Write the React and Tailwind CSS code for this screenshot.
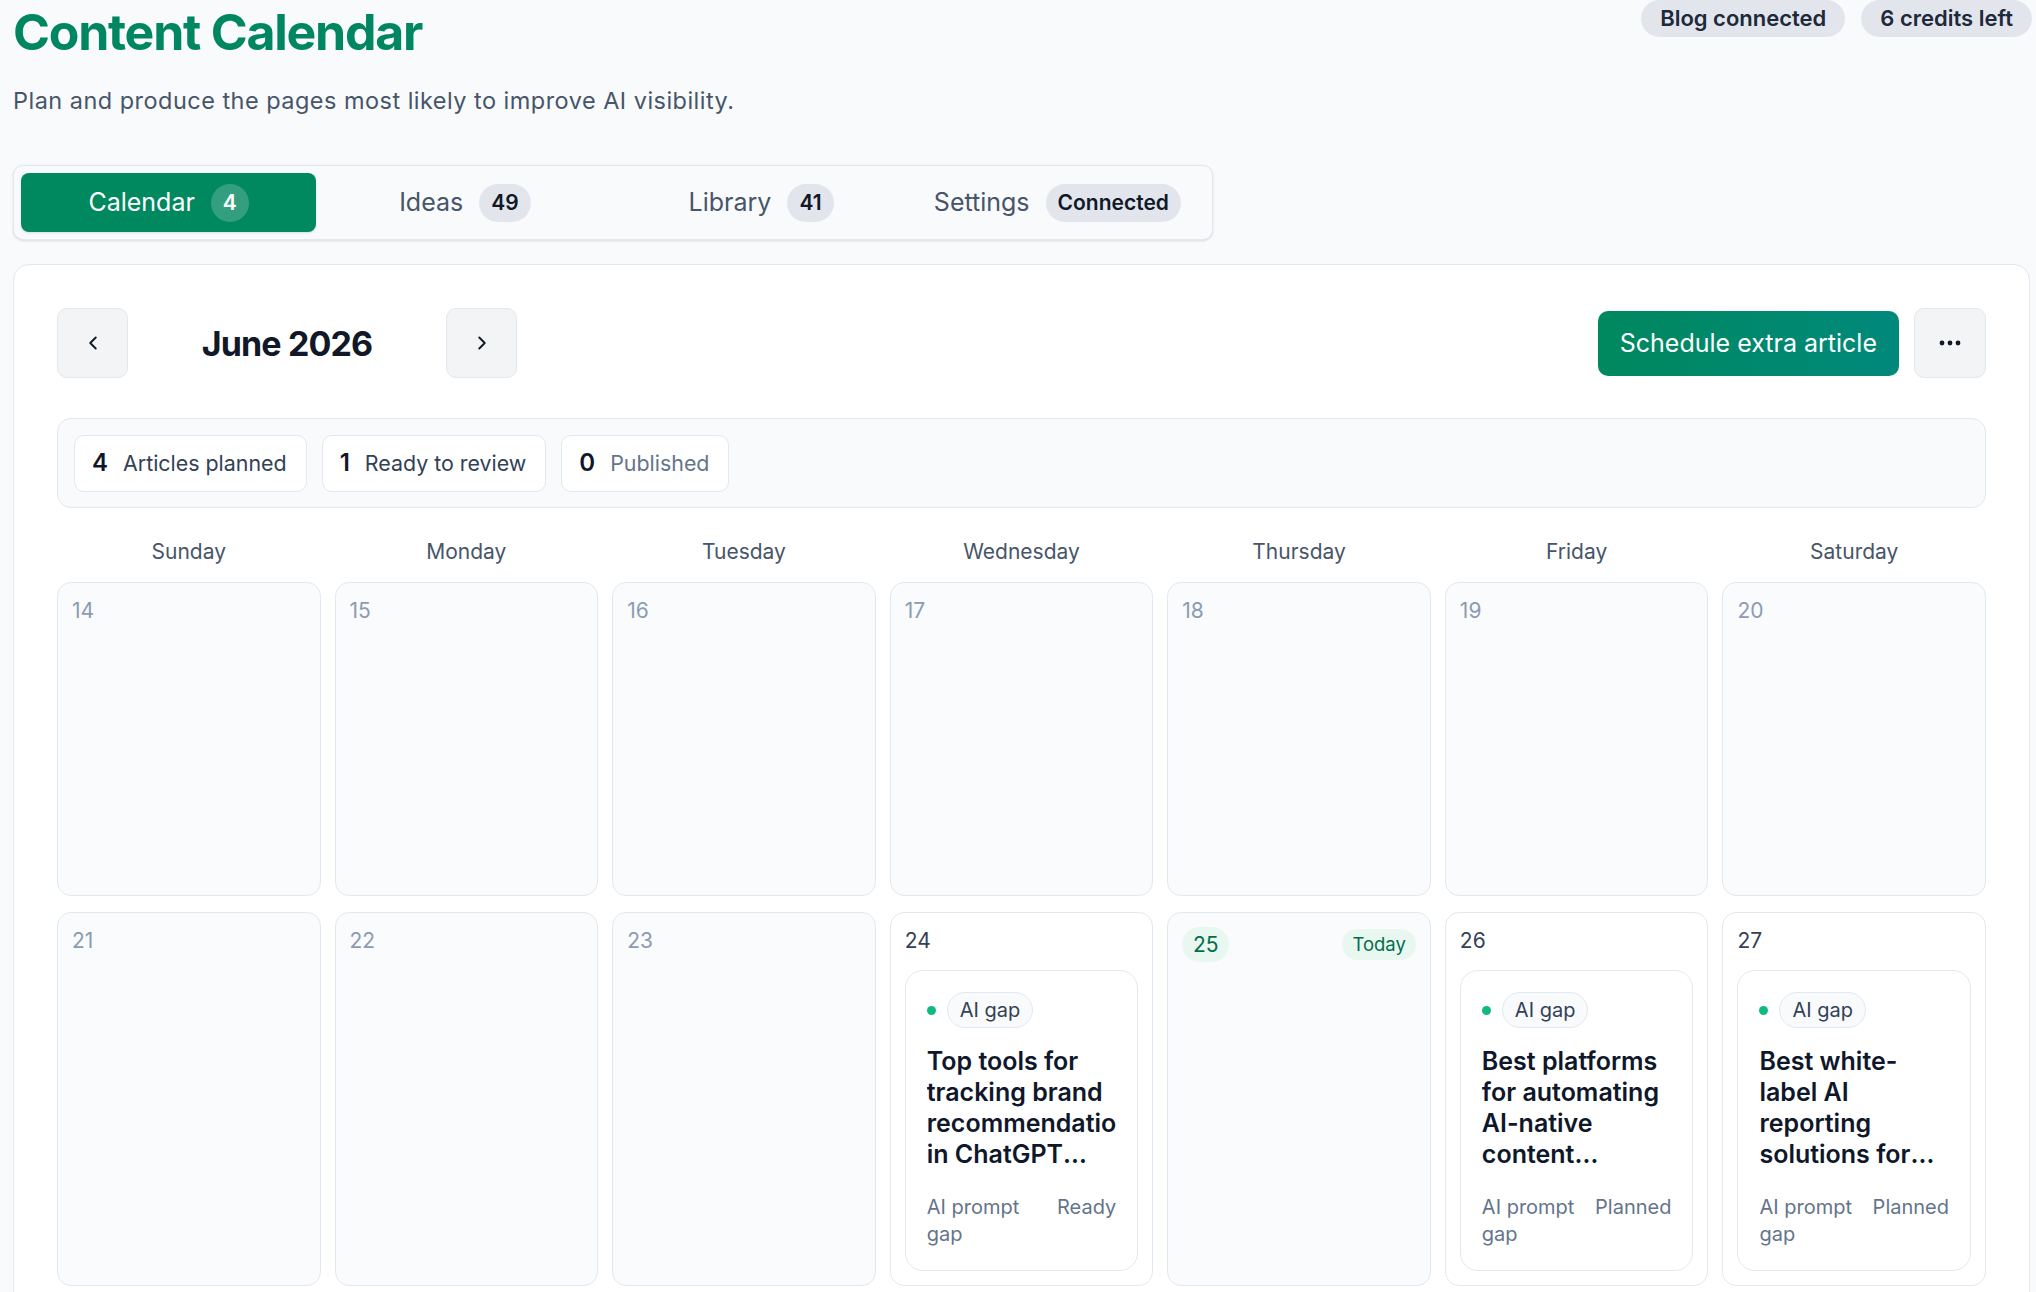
import React from "react";

function Chevron({ dir }) {
  return (
    <svg width="22" height="22" viewBox="0 0 24 24" fill="none" stroke="#111827" strokeWidth="2.1" strokeLinecap="round" strokeLinejoin="round">
      {dir === "left" ? <path d="M15 6l-6 6 6 6" /> : <path d="M9 6l6 6-6 6" />}
    </svg>
  );
}

function Tab({ label, count, active }) {
  return (
    <div
      className={
        "flex h-[59px] items-center justify-center gap-4 rounded-[8px] " +
        (active ? "bg-[#00885e] text-white shadow-sm" : "text-[#475569]")
      }
    >
      <span className="text-[25px]">{label}</span>
      <span
        className={
          "flex h-[38px] items-center justify-center rounded-full text-[21px] font-semibold " +
          (active ? "w-[38px] bg-white/20 text-white" : "min-w-[38px] bg-[#e2e6ec] px-[12px] text-[#111827]")
        }
      >
        {count}
      </span>
    </div>
  );
}

function Stat({ n, label, muted }) {
  return (
    <div className="flex h-[57px] items-center gap-[15px] rounded-[10px] border border-[#e2e8f0] bg-white pl-[17px] pr-[19px]">
      <span className="text-[24px] font-semibold text-[#0f172a]">{n}</span>
      <span className={"text-[21.4px] " + (muted ? "text-[#64748b]" : "text-[#334155]")}>{label}</span>
    </div>
  );
}

function Article({ title, status }) {
  return (
    <div className="mt-[15px] rounded-[18px] border border-[#e2e8f0] bg-white px-[21px] pb-[22px] pt-[21px]">
      <div className="flex items-center gap-[11px]">
        <span className="h-[9px] w-[9px] rounded-full bg-[#10b981]" />
        <span className="flex h-[36px] items-center rounded-full border border-[#e2e8f0] bg-[#f8fafc] px-[12px] text-[20px] text-[#334155]">
          AI gap
        </span>
      </div>
      <div className="mt-[18px] line-clamp-4 overflow-hidden text-[25px] font-semibold leading-[31px] text-[#0f172a]">
        {title}
      </div>
      <div className="mt-[24px] flex justify-between gap-4 text-[20px] leading-[27px] text-[#64748b]">
        <span className="min-w-0">AI prompt gap</span>
        <span className="shrink-0">{status}</span>
      </div>
    </div>
  );
}

function Cell({ d, article, today }) {
  const white = !!article;
  return (
    <div
      className={
        "min-h-[314px] rounded-[14px] border border-[#e2e8f0] p-[14px] " +
        (white ? "bg-white" : "bg-[#f9fbfc]")
      }
    >
      {today ? (
        <div className="flex items-center justify-between">
          <span className="flex h-[35px] w-[47px] items-center justify-center rounded-full bg-[#e8f8f0] text-[21px] text-[#046c4e]">
            {d}
          </span>
          <span className="flex h-[31px] items-center rounded-full bg-[#e8f8f0] px-[10px] text-[18.5px] text-[#046c4e]">
            Today
          </span>
        </div>
      ) : (
        <div className={"text-[21px] leading-[28px] " + (white ? "text-[#334155]" : "text-[#8c9bb1]")}>{d}</div>
      )}
      {article && <Article {...article} />}
    </div>
  );
}

export default function App() {
  const days = ["Sunday", "Monday", "Tuesday", "Wednesday", "Thursday", "Friday", "Saturday"];
  const cells = [
    { d: 14 },
    { d: 15 },
    { d: 16 },
    { d: 17 },
    { d: 18 },
    { d: 19 },
    { d: 20 },
    { d: 21 },
    { d: 22 },
    { d: 23 },
    {
      d: 24,
      article: {
        title: "Top tools for tracking brand recommendations in ChatGPT responses",
        status: "Ready",
      },
    },
    { d: 25, today: true },
    {
      d: 26,
      article: {
        title: "Best platforms for automating AI-native content creation and distribution",
        status: "Planned",
      },
    },
    {
      d: 27,
      article: {
        title: "Best white-label AI reporting solutions for agencies and consultants",
        status: "Planned",
      },
    },
  ];

  return (
    <div className="min-h-screen overflow-hidden bg-[#f8fafc] pl-[13px] pr-[6px] [font-family:Inter,'Noto_Sans',sans-serif]">
      <div className="flex items-start justify-between">
        <div>
          <h1 className="pt-[4px] text-[50px] font-bold leading-[56px] tracking-tight text-[#008761]">Content Calendar</h1>
          <p className="mt-[26px] text-[23.5px] leading-[30px] tracking-[0.02em] text-[#475569]">
            Plan and produce the pages most likely to improve AI visibility.
          </p>
        </div>
        <div className="-mr-[2px] flex gap-[16px]">
          <span className="flex h-[37px] items-center rounded-full bg-[#e2e6ec] px-[19px] text-[22px] font-semibold text-[#1e293b]">
            Blog connected
          </span>
          <span className="flex h-[37px] items-center rounded-full bg-[#e2e6ec] px-[19px] text-[22px] font-semibold text-[#1e293b]">
            6 credits left
          </span>
        </div>
      </div>

      <div className="mt-[49px] grid w-[1200px] grid-cols-4 gap-[1px] rounded-[10px] border border-[#e2e8f0] bg-[#f8fafc] p-[7px] shadow-sm">
        <Tab label="Calendar" count="4" active />
        <Tab label="Ideas" count="49" />
        <Tab label="Library" count="41" />
        <Tab label="Settings" count="Connected" />
      </div>

      <div className="mt-[24px] rounded-[16px] border border-[#e2e8f0] bg-white p-[43px]">
        <div className="flex items-center justify-between">
          <div className="flex items-center">
            <button className="flex h-[70px] w-[71px] items-center justify-center rounded-[10px] border border-[#e2e8f0] bg-[#f3f4f6]">
              <Chevron dir="left" />
            </button>
            <div className="w-[318px] text-center text-[34px] font-bold tracking-tight text-[#111827]">June 2026</div>
            <button className="flex h-[70px] w-[71px] items-center justify-center rounded-[10px] border border-[#e2e8f0] bg-[#f3f4f6]">
              <Chevron dir="right" />
            </button>
          </div>
          <div className="flex items-center gap-[15px]">
            <button className="flex h-[65px] items-center rounded-[10px] bg-gradient-to-r from-[#00885e] to-[#00897b] px-[22px] pt-[2px] text-[25px] text-white">
              Schedule extra article
            </button>
            <button className="flex h-[70px] w-[72px] items-center justify-center rounded-[10px] border border-[#e2e8f0] bg-[#f3f4f6]">
              <svg width="22" height="6" viewBox="0 0 22 6" fill="#111827">
                <circle cx="3" cy="3" r="2.4" />
                <circle cx="11" cy="3" r="2.4" />
                <circle cx="19" cy="3" r="2.4" />
              </svg>
            </button>
          </div>
        </div>

        <div className="mt-[40px] flex h-[90px] items-center gap-[15px] rounded-[14px] border border-[#e2e8f0] bg-[#f8fafc] px-[16px]">
          <Stat n="4" label="Articles planned" />
          <Stat n="1" label="Ready to review" />
          <Stat n="0" label="Published" muted />
        </div>

        <div className="mt-[30px] grid grid-cols-7 gap-x-[14px]">
          {days.map((d) => (
            <div key={d} className="text-center text-[21px] leading-[28px] text-[#475569]">
              {d}
            </div>
          ))}
        </div>

        <div className="mt-[16px] grid grid-cols-7 gap-x-[14px] gap-y-[16px]">
          {cells.map((c) => (
            <Cell key={c.d} {...c} />
          ))}
        </div>
      </div>
    </div>
  );
}
